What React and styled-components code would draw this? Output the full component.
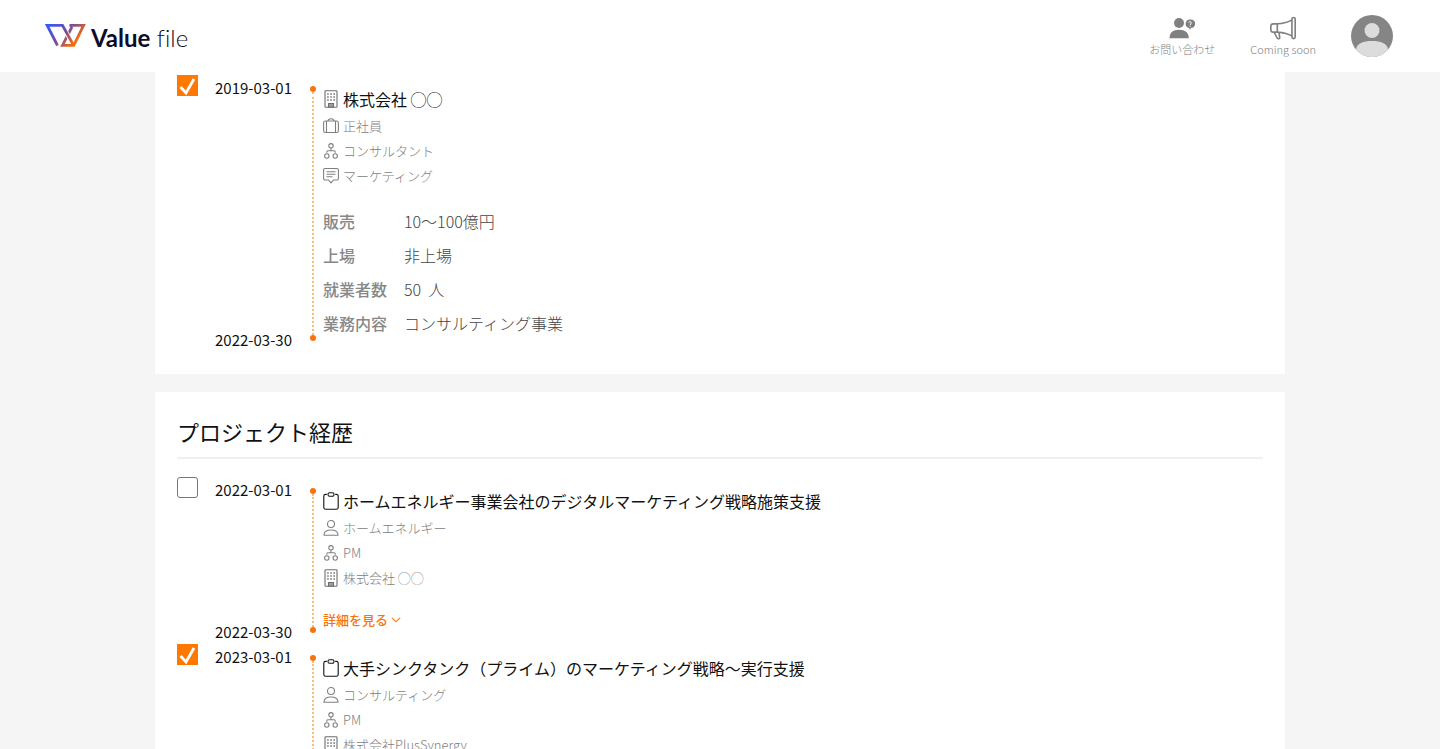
import React, { useState } from "react";
import styled, { createGlobalStyle } from "styled-components";
import { BsChevronDown, BsMegaphone } from "react-icons/bs";

const GlobalStyle=createGlobalStyle`
    *{
        box-sizing: border-box;
    }
    body{
        margin: 0;
        background-color: #f5f5f5;
        color: #111;
        font-family: "Noto Sans CJK JP", "Noto Sans", sans-serif;
    }
`
const Header=styled.header`
    position: sticky;
    top: 0;
    z-index: 1;
    display: flex;
    align-items: center;
    justify-content: space-between;
    height: 72px;
    padding: 0 47px 0 45px;
    background-color: white;
`
const Logo=styled.a`
    display: flex;
    align-items: baseline;
    gap: 5px;
    color: #0e0b2b;
    font-family: Lato, sans-serif;
    font-size: 24px;
    font-weight: 300;
    font-variant-ligatures: none;
    line-height: 24px;
    text-decoration: none;
    & strong{
        font-weight: 700;
    }
`
const Nav=styled.nav`
    display: flex;
    align-items: center;
    gap: 35px;
`
const NavLink=styled.a`
    display: flex;
    flex-direction: column;
    align-items: center;
    color: #808080;
    font-size: 11px;
    font-weight: 300;
    line-height: 16px;
    text-decoration: none;
`
const Avatar=styled.button`
    display: flex;
    padding: 0;
    border: none;
    border-radius: 50%;
    background: none;
    cursor: pointer;
`
const Main=styled.main`
    display: flex;
    flex-direction: column;
    gap: 18px;
    max-width: 1130px;
    margin: 0 auto;
`
const Card=styled.section`
    padding: ${(props)=>props.$continued?"3px":"22px"} 22px 22px;
    background-color: white;
`
const CardTitle=styled.h2`
    margin: 0 0 18px;
    padding-bottom: 9px;
    border-bottom: 2px solid #f0f0f0;
    font-size: 22px;
    font-weight: 400;
    line-height: 34px;
`
const Row=styled.article`
    display: grid;
    grid-template-columns: 38px 95px 13px 1fr;
`
const Checkbox=styled.input`
    appearance: none;
    width: 21px;
    height: 21px;
    margin: 0;
    border: 1px solid #767676;
    border-radius: 3px;
    background-color: white;
    cursor: pointer;
    &:checked{
        border: none;
        border-radius: 0;
        background-color: #ff7800;
    }
`
const CheckCell=styled.label`
    display: grid;
    align-self: start;
    justify-items: start;
    & > *{
        grid-area: 1 / 1;
    }
    & svg{
        pointer-events: none;
    }
`
const Dates=styled.div`
    display: flex;
    flex-direction: column;
    justify-content: space-between;
    font-size: 15px;
    line-height: 25px;
`
const Timeline=styled.div`
    display: flex;
    flex-direction: column;
    align-items: center;
    width: 6px;
    padding: 11px 0;
`
const Dot=styled.span`
    width: 6px;
    height: 6px;
    border-radius: 50%;
    background-color: #f9730c;
`
const Line=styled.span`
    flex: 1;
    border-left: 2px dotted #f6bd7c;
`
const Content=styled.div`
    padding: 10px 0 12px;
`
const ItemTitle=styled.h3`
    display: flex;
    align-items: center;
    gap: 4px;
    margin: 0;
    font-size: 16px;
    font-weight: 400;
    line-height: 28px;
`
const Meta=styled.div`
    display: flex;
    align-items: center;
    gap: 4px;
    color: #808080;
    font-size: 13px;
    font-weight: 300;
    line-height: 25px;
`
const Details=styled.dl`
    display: grid;
    grid-template-columns: 81px 1fr;
    margin: 16px 0 0;
    color: #444;
    font-size: 16px;
    line-height: 34px;
    & dt{
        color: #888;
        font-weight: 500;
    }
    & dd{
        margin: 0;
        font-weight: 300;
        white-space: pre;
    }
`
const MoreButton=styled.button`
    display: flex;
    align-items: center;
    gap: 3px;
    margin-top: 17px;
    padding: 0;
    border: none;
    background: none;
    color: #f9730c;
    font-family: inherit;
    font-size: 13px;
    font-weight: 500;
    line-height: 25px;
    cursor: pointer;
`

const LogoMark=()=>(
    <svg width="41" height="24" viewBox="0 0 41 24" fill="none" strokeWidth="2.8" aria-hidden="true">
        <defs>
            <linearGradient id="mark" x1="4" y1="0" x2="30" y2="26" gradientUnits="userSpaceOnUse">
                <stop offset="0" stopColor="#2f5bff"/>
                <stop offset="0.5" stopColor="#7a4a9c"/>
                <stop offset="0.85" stopColor="#f26a10"/>
                <stop offset="1" stopColor="#ff7800"/>
            </linearGradient>
        </defs>
        <path d="M24.500 2.400H38.600L28.800 22.300H17.500L27 3.800" stroke="url(#mark)"/>
        <path d="M19.500 6 25.500 17" stroke="white" strokeWidth="4.500"/>
        <path d="M12.500 22.500 2.200 2.400H17.500L28.500 22.300" stroke="url(#mark)"/>
    </svg>
)

const ContactIcon=()=>(
    <svg width="26" height="26" viewBox="0 0 26 26" fill="currentColor" aria-hidden="true">
        <circle cx="10" cy="8" r="5"/>
        <path d="M.5 23.200C.5 17.500 4 14.800 10 14.800S19.800 17.500 19.800 23.200Z"/>
        <path d="M21 4.500a4.300 4.300 0 1 1 .8 8.500L21 15 20 13A4.300 4.300 0 0 1 21 4.500Z"/>
        <path d="M19.700 7.800C19.900 6.200 22.500 6.400 22.300 8 22.200 8.800 21.200 9 21.200 10M21.100 10.900v.9" fill="none" stroke="white"/>
    </svg>
)

const AvatarIcon=()=>(
    <svg width="42" height="42" viewBox="0 0 42 42" aria-hidden="true">
        <clipPath id="face"><circle cx="21" cy="21" r="21"/></clipPath>
        <g clipPath="url(#face)">
            <path d="M0 0h42v42H0z" fill="#858585"/>
            <circle cx="21" cy="15.500" r="7.500" fill="#dcdcdc"/>
            <path d="M5 42V34C6 28.500 12 26 21 26S36 28.500 37 34V42Z" fill="#dcdcdc"/>
        </g>
    </svg>
)

const ItemIcon=({color="currentColor",children})=>(
    <svg width="16" height="18" viewBox="0 0 16 18" fill="none" stroke={color} strokeWidth="1.100" aria-hidden="true">
        {children}
    </svg>
)

const icons={
    building:(
        <ItemIcon color="#6e6e6e">
            <rect x="2" y=".8" width="12" height="16.400" rx=".8"/>
            <path d="M4.200 4h7.800M4.200 7h7.800M4.200 10h7.800" strokeWidth="1.600" strokeDasharray="1.500 1.600"/>
            <path d="M5.500 17v-3.500h5V17Z" fill="#a0a0a0"/>
        </ItemIcon>
    ),
    suitcase:(
        <ItemIcon>
            <rect x=".6" y="4" width="14.800" height="11.500" rx="1.800"/>
            <path d="M3.500 4v11.500M12.500 4v11.500M5 4C5.200 1 10.800 1 11 4"/>
        </ItemIcon>
    ),
    role:(
        <ItemIcon>
            <circle cx="8" cy="3.800" r="2.200"/>
            <circle cx="3.800" cy="14" r="2.200"/>
            <circle cx="12.200" cy="14" r="2.200"/>
            <path d="M8 6v2.800M3.800 10.800V9.800Q3.800 8.800 4.800 8.800H11.200Q12.200 8.800 12.200 9.800V10.800"/>
        </ItemIcon>
    ),
    chat:(
        <ItemIcon>
            <path d="M2 1.500H14Q15.400 1.500 15.400 2.900V11.600Q15.400 13 14 13H10.500L8 15.800 5.500 13H2Q.6 13 .6 11.600V2.900Q.6 1.500 2 1.500Z"/>
            <path d="M3.500 4.800h9M3.500 7.300h9M3.500 9.800h6"/>
        </ItemIcon>
    ),
    person:(
        <ItemIcon>
            <circle cx="8" cy="5" r="3.500"/>
            <path d="M1 16.200C1 12.500 3.500 11 8 11S15 12.500 15 16.200Z" strokeLinejoin="round"/>
        </ItemIcon>
    ),
    clipboard:(
        <ItemIcon>
            <path d="M3.800 2.400H2.600Q.8 2.400.8 4.200V15.400Q.8 17.200 2.600 17.200H13.400Q15.200 17.200 15.200 15.400V4.200Q15.200 2.400 13.400 2.400H12.200"/>
            <rect x="5" y=".8" width="6" height="3.400" rx="1.500"/>
        </ItemIcon>
    ),
}

const jobs=[
    {
        id:1,
        selected:true,
        start:"2019-03-01",
        end:"2022-03-30",
        icon:"building",
        title:"株式会社 ◯◯",
        meta:[["suitcase","正社員"],["role","コンサルタント"],["chat","マーケティング"]],
        details:[["販売","10～100億円"],["上場","非上場"],["就業者数","50  人"],["業務内容","コンサルティング事業"]],
    },
]

const projects=[
    {
        id:2,
        selected:false,
        start:"2022-03-01",
        end:"2022-03-30",
        icon:"clipboard",
        title:"ホームエネルギー事業会社のデジタルマーケティング戦略施策支援",
        meta:[["person","ホームエネルギー"],["role","PM"],["building","株式会社 ◯◯"]],
    },
    {
        id:3,
        selected:true,
        start:"2023-03-01",
        icon:"clipboard",
        title:"大手シンクタンク（プライム）のマーケティング戦略～実行支援",
        meta:[["person","コンサルティング"],["role","PM"],["building","株式会社PlusSynergy"]],
    },
]

const HistoryRow=({item})=>{
    const [selected,setSelected]=useState(item.selected);

    return(
        <Row>
            <CheckCell>
                <Checkbox type="checkbox" aria-label={item.title} checked={selected} onChange={(e)=>setSelected(e.target.checked)}/>
                {selected && (
                    <svg width="21" height="21" viewBox="0 0 21 21" fill="none" stroke="white" strokeWidth="2.800" aria-hidden="true">
                        <path d="M3.500 12 9 18 17 4"/>
                    </svg>
                )}
            </CheckCell>
            <Dates>
                <time>{item.start}</time>
                {item.end && <time>{item.end}</time>}
            </Dates>
            <Timeline>
                <Dot/>
                <Line/>
                {item.end && <Dot/>}
            </Timeline>
            <Content>
                <ItemTitle>{icons[item.icon]}{item.title}</ItemTitle>
                {item.meta.map(([icon,text])=>(
                    <Meta key={icon}>{icons[icon]}{text}</Meta>
                ))}
                {item.details && (
                    <Details>
                        {item.details.map(([name,value])=>(
                            <React.Fragment key={name}>
                                <dt>{name}</dt>
                                <dd>{value}</dd>
                            </React.Fragment>
                        ))}
                    </Details>
                )}
                {item.end && !item.details && (
                    <MoreButton type="button">詳細を見る<BsChevronDown size={10} strokeWidth={1}/></MoreButton>
                )}
            </Content>
        </Row>
    )
}

const App=()=>{
    return(
        <>
            <GlobalStyle/>
            <Header>
                <Logo href="#">
                    <LogoMark/>
                    <span><strong>Value</strong> file</span>
                </Logo>
                <Nav>
                    <NavLink href="#"><ContactIcon/>お問い合わせ</NavLink>
                    <NavLink href="#"><BsMegaphone size={26}/>Coming soon</NavLink>
                    <Avatar type="button" aria-label="アカウント"><AvatarIcon/></Avatar>
                </Nav>
            </Header>
            <Main>
                <Card $continued>
                    {jobs.map((item)=><HistoryRow key={item.id} item={item}/>)}
                </Card>
                <Card>
                    <CardTitle>プロジェクト経歴</CardTitle>
                    {projects.map((item)=><HistoryRow key={item.id} item={item}/>)}
                </Card>
            </Main>
        </>
    )
}
export default App;
